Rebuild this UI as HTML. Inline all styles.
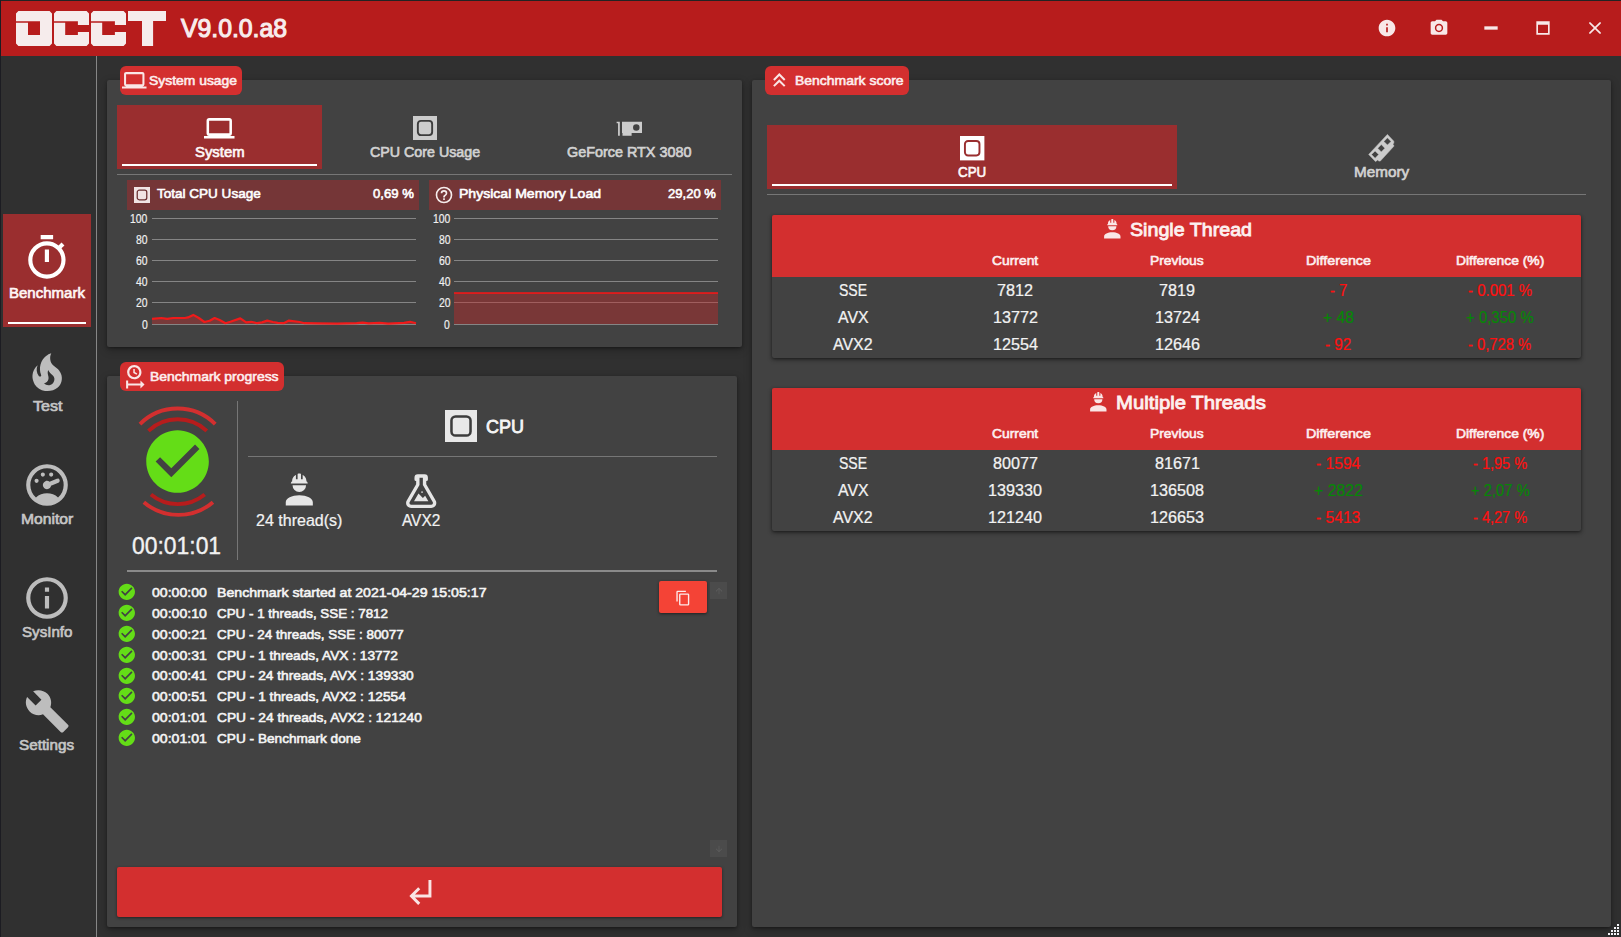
<!DOCTYPE html>
<html>
<head>
<meta charset="utf-8">
<title>OCCT</title>
<style>
html,body{margin:0;padding:0;}
body{width:1621px;height:937px;overflow:hidden;background:#303030;font-family:"Liberation Sans",sans-serif;}
#w{position:relative;width:1621px;height:937px;overflow:hidden;background:#303030;}
.a{position:absolute;}
.i{position:absolute;overflow:visible;}
.t{position:absolute;white-space:nowrap;line-height:1;transform-origin:0 50%;font-weight:400;}
.m{-webkit-text-stroke:0.044em currentColor;}
.r{-webkit-text-stroke:0.015em currentColor;}
.panel{position:absolute;background:#424242;border-radius:2px;box-shadow:0 1px 3px rgba(0,0,0,.33),0 3px 9px rgba(0,0,0,.28);}
.badge{position:absolute;background:#d32f2f;border-radius:6px;height:29px;}
.hr{position:absolute;height:1px;background:#767676;}
.card{position:absolute;background:#424242;border-radius:2px;box-shadow:0 1px 3px rgba(0,0,0,.4),0 2px 5px rgba(0,0,0,.3);}
</style>
</head>
<body>
<div id="w">
<div class="a" style="left:0;top:0;width:1621px;height:1px;background:#232323"></div>
<div class="a" style="left:0;top:0;width:1px;height:937px;background:#1c1c22"></div>
<div class="a" style="left:1px;top:1px;width:1620px;height:55px;background:#b71c1c"></div>
<svg class="i" style="left:0;top:0" width="180" height="56" viewBox="0 0 180 56">
<g fill="#f6ecec">
<path d="M18.4 11H49.6L52 13.4V43.6L49.6 46H18.4L16 43.6V22.75H28V34.9H40V21.25H16V13.4Z"/>
<path d="M56.4 11H86.6L89 13.4V25H77.9V21.25H54V13.4ZM54 22.75H65.2V34.9H77.9V32H89V43.6L86.6 46H56.4L54 43.6Z"/>
<path d="M93.4 11H123.6L126 13.4V25H114.9V21.25H91V13.4ZM91 22.75H102.2V34.9H114.9V32H126V43.6L123.6 46H93.4L91 43.6Z"/>
<path d="M128 11H166V21H153.1V46H142V21H128Z"/>
</g></svg>
<svg class="i" style="left:1376.8px;top:18.25px" width="20" height="20" viewBox="0 0 24 24"><path fill="#f8e8e8" d="M12 2C6.48 2 2 6.48 2 12s4.48 10 10 10 10-4.48 10-10S17.52 2 12 2zm1 15h-2v-6h2v6zm0-8h-2V7h2v2z"/></svg>
<svg class="i" style="left:1428.8px;top:18.25px" width="20" height="20" viewBox="0 0 24 24"><path fill="#f8e8e8" d="M9 2L7.17 4H4c-1.1 0-2 .9-2 2v12c0 1.1.9 2 2 2h16c1.1 0 2-.9 2-2V6c0-1.1-.9-2-2-2h-3.17L15 2H9zm3 15c-2.76 0-5-2.24-5-5s2.24-5 5-5 5 2.24 5 5-2.24 5-5 5z"/><circle cx="12" cy="12" r="3.2" fill="#f8e8e8"/></svg>
<svg class="i" style="left:1480.8px;top:18.25px" width="20" height="20" viewBox="0 0 24 24"><path fill="#f8e8e8" d="M20,14H4V10H20Z"/></svg>
<svg class="i" style="left:1532.8px;top:18.25px" width="20" height="20" viewBox="0 0 24 24"><path fill="#f8e8e8" d="M4,4H20V20H4V4M6,8V18H18V8H6Z"/></svg>
<svg class="i" style="left:1584.8px;top:18.25px" width="20" height="20" viewBox="0 0 24 24"><path fill="#f8e8e8" d="M13.46,12L19,17.54V19H17.54L12,13.46L6.46,19H5V17.54L10.54,12L5,6.46V5H6.46L12,10.54L17.54,5H19V6.46L13.46,12Z"/></svg>
<div class="a" style="left:96px;top:56px;width:1px;height:881px;background:#868686"></div>
<div class="a" style="left:3px;top:214px;width:88px;height:113px;background:#9a2e2f"></div>
<div class="a" style="left:8px;top:322px;width:78px;height:2px;background:#fff"></div>
<svg class="i" style="left:22.1px;top:233.4px" width="49.8" height="49.8" viewBox="0 0 24 24"><path fill="#ffffff" d="M12,20A7,7 0 0,1 5,13A7,7 0 0,1 12,6A7,7 0 0,1 19,13A7,7 0 0,1 12,20M19.03,7.39L20.45,5.97C20,5.46 19.55,5 19.04,4.56L17.62,6C16.07,4.74 14.12,4 12,4A9,9 0 0,0 3,13A9,9 0 0,0 12,22C17,22 21,17.97 21,13C21,10.88 20.26,8.93 19.03,7.39M11,14H13V8H11M15,1H9V3H15V1Z"/></svg>
<svg class="i" style="left:21.5px;top:346.7px" width="50.4" height="50.4" viewBox="0 0 24 24"><path fill="#bdbdbd" d="M17.66 11.2C17.43 10.9 17.15 10.64 16.89 10.38C16.22 9.78 15.46 9.35 14.82 8.72C13.33 7.26 13 4.85 13.95 3C13 3.23 12.17 3.75 11.46 4.32C8.87 6.4 7.85 10.07 9.07 13.22C9.11 13.32 9.15 13.42 9.15 13.55C9.15 13.77 9 13.97 8.8 14.05C8.57 14.15 8.33 14.09 8.14 13.93C8.08 13.88 8.04 13.83 8 13.76C6.87 12.33 6.69 10.28 7.45 8.64C5.78 10 4.87 12.3 5 14.47C5.06 14.97 5.12 15.47 5.29 15.97C5.43 16.57 5.7 17.17 6 17.7C7.08 19.43 8.95 20.67 10.96 20.92C13.1 21.19 15.39 20.8 17.03 19.32C18.86 17.66 19.5 15 18.56 12.72L18.43 12.46C18.22 12 17.66 11.2 17.66 11.2M14.5 17.5C14.22 17.74 13.76 18 13.4 18.1C12.28 18.5 11.16 17.94 10.5 17.28C11.69 17 12.4 16.12 12.61 15.23C12.78 14.43 12.46 13.77 12.33 13C12.21 12.26 12.23 11.63 12.5 10.94C12.69 11.32 12.89 11.7 13.13 12C13.9 13 15.11 13.44 15.37 14.8C15.41 14.94 15.43 15.08 15.43 15.23C15.46 16.05 15.1 16.95 14.5 17.5Z"/></svg>
<svg class="i" style="left:22.1px;top:460px" width="50" height="50" viewBox="0 0 24 24"><path fill="#bdbdbd" d="M12,2A10,10 0 0,0 2,12A10,10 0 0,0 12,22A10,10 0 0,0 22,12A10,10 0 0,0 12,2M12,4A8,8 0 0,1 20,12C20,14.4 19,16.5 17.3,18C15.9,16.7 14,16 12,16C10,16 8.2,16.7 6.7,18C5,16.5 4,14.4 4,12A8,8 0 0,1 12,4M10,6A1,1 0 0,0 9,7A1,1 0 0,0 10,8A1,1 0 0,0 11,7A1,1 0 0,0 10,6M14,6A1,1 0 0,0 13,7A1,1 0 0,0 14,8A1,1 0 0,0 15,7A1,1 0 0,0 14,6M17.09,8.94C16.96,8.94 16.84,8.97 16.7,9L13.5,10.32L13.23,10.43C12.67,10 11.91,9.88 11.25,10.15C10.23,10.56 9.73,11.73 10.15,12.75C10.56,13.77 11.73,14.27 12.75,13.85C13.41,13.59 13.88,13 14,12.28L14.23,12.18L17.45,10.88L17.47,10.87C18,10.66 18.23,10.08 18.03,9.56C17.87,9.18 17.5,8.93 17.09,8.94M7,9A1,1 0 0,0 6,10A1,1 0 0,0 7,11A1,1 0 0,0 8,10A1,1 0 0,0 7,9Z"/></svg>
<svg class="i" style="left:22.1px;top:573px" width="50" height="50" viewBox="0 0 24 24"><path fill="#bdbdbd" d="M11,9H13V7H11M12,20C7.59,20 4,16.41 4,12C4,7.59 7.59,4 12,4C16.41,4 20,7.59 20,12C20,16.41 16.41,20 12,20M12,2A10,10 0 0,0 2,12A10,10 0 0,0 12,22A10,10 0 0,0 22,12A10,10 0 0,0 12,2M11,17H13V11H11V17Z"/></svg>
<svg class="i" style="left:23.7px;top:687.5px" width="46.5" height="46.5" viewBox="0 0 24 24"><path fill="#bdbdbd" d="M22.7,19L13.6,9.9C14.5,7.6 14,4.9 12.1,3C10.1,1 7.1,0.6 4.7,1.7L9,6L6,9L1.6,4.7C0.4,7.1 0.9,10.1 2.9,12.1C4.8,14 7.5,14.5 9.8,13.6L18.9,22.7C19.3,23.1 19.9,23.1 20.3,22.7L22.6,20.4C23.1,20 23.1,19.3 22.7,19Z"/></svg>
<div class="panel" style="left:107px;top:80px;width:635px;height:267px"></div>
<div class="panel" style="left:107px;top:376px;width:630px;height:551px"></div>
<div class="panel" style="left:752px;top:80px;width:859px;height:847px"></div>
<div class="badge" style="left:120px;top:66px;width:122px"></div>
<svg class="i" style="left:122.2px;top:68.3px" width="24.5" height="24.5" viewBox="0 0 24 24"><path fill="#fae6e6" d="M4,6H20V16H4M20,18A2,2 0 0,0 22,16V6C22,4.89 21.1,4 20,4H4C2.89,4 2,4.89 2,6V16A2,2 0 0,0 4,18H0V20H24V18H20Z"/></svg>
<div class="badge" style="left:120px;top:362px;width:164px"></div>
<svg class="i" style="left:122px;top:363.8px" width="24.6" height="24.6" viewBox="0 0 24 24"><path fill="#fae6e6" d="M12,1C8.14,1 5,4.14 5,8A7,7 0 0,0 12,15C15.86,15 19,11.87 19,8C19,4.14 15.86,1 12,1M12,3.15C14.67,3.15 16.85,5.32 16.85,8C16.85,10.68 14.67,12.85 12,12.85A4.85,4.85 0 0,1 7.15,8A4.85,4.85 0 0,1 12,3.15M11,5V8.69L14.19,10.53L14.94,9.23L12.5,7.82V5M4,16V24H6V21H18V24L22,20L18,16V19H6V16"/></svg>
<div class="badge" style="left:765px;top:66px;width:143.5px"></div>
<svg class="i" style="left:766.9px;top:68.3px" width="24.6" height="24.6" viewBox="0 0 24 24"><path fill="#fae6e6" d="M7.41,18.41L6,17L12,11L18,17L16.59,18.41L12,13.83L7.41,18.41M7.41,12.41L6,11L12,5L18,11L16.59,12.41L12,7.83L7.41,12.41Z"/></svg>
<div class="a" style="left:117px;top:105px;width:205px;height:63.6px;background:#9a2e2f"></div>
<div class="a" style="left:122px;top:164px;width:195px;height:2px;background:#fff"></div>
<svg class="i" style="left:204.3px;top:113px" width="30.5" height="30.5" viewBox="0 0 24 24"><path fill="#ffffff" d="M4,6H20V16H4M20,18A2,2 0 0,0 22,16V6C22,4.89 21.1,4 20,4H4C2.89,4 2,4.89 2,6V16A2,2 0 0,0 4,18H0V20H24V18H20Z"/></svg>
<svg class="i" style="left:412.6px;top:115.9px" width="24" height="24" viewBox="0 0 24 24"><rect x="0" y="0" width="24" height="24" fill="#cccccc"/><rect x="4.85" y="4.85" width="14.3" height="14.3" rx="3.1" fill="none" stroke="#3c3c3c" stroke-width="1.9"/></svg>
<svg class="i" style="left:614px;top:113px" width="30" height="30" viewBox="0 0 24 24"><path fill="#cccccc" fill-rule="evenodd" d="M2.1 7H4.65V18.2H3.25V8.1H2.1ZM6.4 7H22.4V16H14.1V18.2H6.8V16H6.4ZM17.84 9A2.6 2.6 0 1 0 17.84 14.2A2.6 2.6 0 1 0 17.84 9Z"/></svg>
<div class="hr" style="left:117px;top:174px;width:615px"></div>
<div class="a" style="left:127px;top:180px;width:292px;height:29.6px;background:#753637"></div>
<div class="a" style="left:429px;top:180px;width:292px;height:29.6px;background:#753637"></div>
<svg class="i" style="left:134px;top:187px" width="16" height="16" viewBox="0 0 24 24"><rect x="0" y="0" width="24" height="24" fill="#f1e4e4"/><rect x="4.85" y="4.85" width="14.3" height="14.3" rx="3.1" fill="none" stroke="#6a2f30" stroke-width="1.9"/></svg>
<svg class="i" style="left:434px;top:185px" width="20" height="20" viewBox="0 0 24 24"><path fill="#f6ecec" d="M11,18H13V16H11V18M12,2A10,10 0 0,0 2,12A10,10 0 0,0 12,22A10,10 0 0,0 22,12A10,10 0 0,0 12,2M12,20C7.59,20 4,16.41 4,12C4,7.59 7.59,4 12,4C16.41,4 20,7.59 20,12C20,16.41 16.41,20 12,20M12,6A4,4 0 0,0 8,10H10A2,2 0 0,1 12,8A2,2 0 0,1 14,10C14,12 11,11.75 11,15H13C13,12.75 16,12.5 16,10A4,4 0 0,0 12,6Z"/></svg>
<svg class="i" style="left:0;top:0" width="1621" height="937" viewBox="0 0 1621 937"><rect x="152" y="218.0" width="264" height="1" fill="#858585"/><rect x="152" y="239.0" width="264" height="1" fill="#858585"/><rect x="152" y="260.0" width="264" height="1" fill="#858585"/><rect x="152" y="281.0" width="264" height="1" fill="#858585"/><rect x="152" y="302.0" width="264" height="1" fill="#858585"/><rect x="152" y="324.0" width="264" height="1" fill="#858585"/><polygon points="152.0,323.9 152.0,318.8 161.3,318.0 167.2,318.8 173.2,318.0 185.0,318.0 188.0,317.4 193.3,314.9 198.8,318.0 204.4,322.0 209.7,320.8 214.6,318.0 219.6,320.0 225.5,323.2 230.4,321.8 240.3,318.4 246.2,322.4 251.1,321.8 257.1,323.2 262.0,322.4 267.3,320.6 272.9,322.0 277.8,322.8 283.7,323.2 289.0,320.6 299.5,322.0 304.4,323.2 317.3,323.4 337.0,323.6 356.7,323.2 362.7,322.6 368.6,323.4 379.4,322.8 388.3,323.6 404.1,322.8 410.0,321.8 416.0,323.2 416.0,323.9" fill="#d32f2f" fill-opacity="0.38"/><polyline points="152.0,318.8 161.3,318.0 167.2,318.8 173.2,318.0 185.0,318.0 188.0,317.4 193.3,314.9 198.8,318.0 204.4,322.0 209.7,320.8 214.6,318.0 219.6,320.0 225.5,323.2 230.4,321.8 240.3,318.4 246.2,322.4 251.1,321.8 257.1,323.2 262.0,322.4 267.3,320.6 272.9,322.0 277.8,322.8 283.7,323.2 289.0,320.6 299.5,322.0 304.4,323.2 317.3,323.4 337.0,323.6 356.7,323.2 362.7,322.6 368.6,323.4 379.4,322.8 388.3,323.6 404.1,322.8 410.0,321.8 416.0,323.2" fill="none" stroke="#f01a1a" stroke-width="2.2" stroke-linejoin="round"/></svg>
<svg class="i" style="left:0;top:0" width="1621" height="937" viewBox="0 0 1621 937"><rect x="454" y="218.0" width="264" height="1" fill="#858585"/><rect x="454" y="239.0" width="264" height="1" fill="#858585"/><rect x="454" y="260.0" width="264" height="1" fill="#858585"/><rect x="454" y="281.0" width="264" height="1" fill="#858585"/><rect x="454" y="302.0" width="264" height="1" fill="#858585"/><rect x="454" y="324.0" width="264" height="1" fill="#858585"/><rect x="454" y="293" width="264" height="31" fill="#c62828" fill-opacity="0.42"/><rect x="454" y="292.2" width="264" height="1.7" fill="#ea1a1a"/></svg>
<svg class="i" style="left:0;top:0" width="300" height="600" viewBox="0 0 300 600"><g fill="none"><path d="M139.98 424.08A53.2 53.2 0 0 1 215.22 424.08" stroke="#d32f2f" stroke-width="3.9"/><path d="M148.41 430.94A42.4 42.4 0 0 1 206.79 430.94" stroke="#b71c1c" stroke-width="3.9"/><path d="M150.89 494.46A42.4 42.4 0 0 0 204.71 494.46" stroke="#b71c1c" stroke-width="3.9"/><path d="M143.85 502.15A53.2 53.2 0 0 0 212.95 502.15" stroke="#d32f2f" stroke-width="3.9"/></g><circle cx="177.6" cy="461.4" r="27" fill="#424242"/></svg>
<svg class="i" style="left:140.05px;top:423.85px" width="75.1" height="75.1" viewBox="0 0 24 24"><path fill="#64dd17" d="M12 2C6.48 2 2 6.48 2 12s4.48 10 10 10 10-4.48 10-10S17.52 2 12 2zm-2 15l-5-5 1.41-1.41L10 14.17l7.59-7.59L19 8l-9 9z"/></svg>
<div class="a" style="left:237px;top:401px;width:1px;height:159px;background:#767676"></div>
<svg class="i" style="left:444.9px;top:410.1px" width="32" height="32" viewBox="0 0 24 24"><rect x="0" y="0" width="24" height="24" fill="#e8e8e8"/><rect x="4.85" y="4.85" width="14.3" height="14.3" rx="3.1" fill="none" stroke="#3c3c3c" stroke-width="1.9"/></svg>
<div class="hr" style="left:248px;top:456px;width:469px"></div>
<svg class="i" style="left:279px;top:470.4px" width="40.6" height="40.6" viewBox="0 0 24 24"><path fill="#e6e6e6" d="M12,15C7.58,15 4,16.79 4,19V21H20V19C20,16.79 16.42,15 12,15M8,9A4,4 0 0,0 12,13A4,4 0 0,0 16,9M11.5,2C11.2,2 11,2.21 11,2.5V5.5H10V3C10,3 7.75,3.86 7.75,6.75C7.75,6.75 7,6.89 7,8H17C16.95,6.89 16.25,6.75 16.25,6.75C16.25,3.86 14,3 14,3V5.5H13V2.5C13,2.21 12.81,2 12.5,2H11.5Z"/></svg>
<svg class="i" style="left:401.1px;top:470.8px" width="40.4" height="40.4" viewBox="0 0 24 24"><path fill="#e6e6e6" d="M5,19A1,1 0 0,0 6,20H18A1,1 0 0,0 19,19C19,18.79 18.93,18.59 18.82,18.43L13,8.35V4H11V8.35L5.18,18.43C5.07,18.59 5,18.79 5,19M6,22A3,3 0 0,1 3,19C3,18.4 3.18,17.84 3.5,17.37L9,7.81V6A1,1 0 0,1 8,5V4A2,2 0 0,1 10,2H14A2,2 0 0,1 16,4V5A1,1 0 0,1 15,6V7.81L20.5,17.37C20.82,17.84 21,18.4 21,19A3,3 0 0,1 18,22H6M13,16L14.34,14.66L16.27,18H7.73L10.39,13.39L13,16M12.5,12A0.5,0.5 0 0,1 13,12.5A0.5,0.5 0 0,1 12.5,13A0.5,0.5 0 0,1 12,12.5A0.5,0.5 0 0,1 12.5,12Z"/></svg>
<div class="a" style="left:127px;top:570px;width:590px;height:2px;background:#8a8a8a"></div>
<svg class="i" style="left:117.3px;top:582.4px" width="19.6" height="19.6" viewBox="0 0 24 24"><path fill="#64dd17" d="M12 2C6.48 2 2 6.48 2 12s4.48 10 10 10 10-4.48 10-10S17.52 2 12 2zm-2 15l-5-5 1.41-1.41L10 14.17l7.59-7.59L19 8l-9 9z"/></svg>
<svg class="i" style="left:117.3px;top:603.2px" width="19.6" height="19.6" viewBox="0 0 24 24"><path fill="#64dd17" d="M12 2C6.48 2 2 6.48 2 12s4.48 10 10 10 10-4.48 10-10S17.52 2 12 2zm-2 15l-5-5 1.41-1.41L10 14.17l7.59-7.59L19 8l-9 9z"/></svg>
<svg class="i" style="left:117.3px;top:624.0px" width="19.6" height="19.6" viewBox="0 0 24 24"><path fill="#64dd17" d="M12 2C6.48 2 2 6.48 2 12s4.48 10 10 10 10-4.48 10-10S17.52 2 12 2zm-2 15l-5-5 1.41-1.41L10 14.17l7.59-7.59L19 8l-9 9z"/></svg>
<svg class="i" style="left:117.3px;top:644.8px" width="19.6" height="19.6" viewBox="0 0 24 24"><path fill="#64dd17" d="M12 2C6.48 2 2 6.48 2 12s4.48 10 10 10 10-4.48 10-10S17.52 2 12 2zm-2 15l-5-5 1.41-1.41L10 14.17l7.59-7.59L19 8l-9 9z"/></svg>
<svg class="i" style="left:117.3px;top:665.6px" width="19.6" height="19.6" viewBox="0 0 24 24"><path fill="#64dd17" d="M12 2C6.48 2 2 6.48 2 12s4.48 10 10 10 10-4.48 10-10S17.52 2 12 2zm-2 15l-5-5 1.41-1.41L10 14.17l7.59-7.59L19 8l-9 9z"/></svg>
<svg class="i" style="left:117.3px;top:686.4px" width="19.6" height="19.6" viewBox="0 0 24 24"><path fill="#64dd17" d="M12 2C6.48 2 2 6.48 2 12s4.48 10 10 10 10-4.48 10-10S17.52 2 12 2zm-2 15l-5-5 1.41-1.41L10 14.17l7.59-7.59L19 8l-9 9z"/></svg>
<svg class="i" style="left:117.3px;top:707.2px" width="19.6" height="19.6" viewBox="0 0 24 24"><path fill="#64dd17" d="M12 2C6.48 2 2 6.48 2 12s4.48 10 10 10 10-4.48 10-10S17.52 2 12 2zm-2 15l-5-5 1.41-1.41L10 14.17l7.59-7.59L19 8l-9 9z"/></svg>
<svg class="i" style="left:117.3px;top:728.0px" width="19.6" height="19.6" viewBox="0 0 24 24"><path fill="#64dd17" d="M12 2C6.48 2 2 6.48 2 12s4.48 10 10 10 10-4.48 10-10S17.52 2 12 2zm-2 15l-5-5 1.41-1.41L10 14.17l7.59-7.59L19 8l-9 9z"/></svg>
<div class="a" style="left:659px;top:581px;width:48px;height:32px;background:#f44336;border-radius:2px;box-shadow:0 1px 3px rgba(0,0,0,.5)"></div>
<svg class="i" style="left:674.6px;top:589.7px" width="16.3" height="16.3" viewBox="0 0 24 24"><path fill="#fdeaea" d="M19,21H8V7H19M19,5H8A2,2 0 0,0 6,7V21A2,2 0 0,0 8,23H19A2,2 0 0,0 21,21V7A2,2 0 0,0 19,5M16,1H4A2,2 0 0,0 2,3V17H4V3H16V1Z"/></svg>
<div class="a" style="left:710px;top:582px;width:17px;height:17px;background:#4b4b4b"></div>
<svg class="i" style="left:713.5px;top:585.5px" width="10" height="10" viewBox="0 0 24 24"><path fill="#5c5c5c" d="M13,20H11V8L5.5,13.5L4.08,12.08L12,4.16L19.92,12.08L18.5,13.5L13,8V20Z"/></svg>
<div class="a" style="left:710px;top:840px;width:17px;height:17px;background:#4b4b4b"></div>
<svg class="i" style="left:713.5px;top:843.5px" width="10" height="10" viewBox="0 0 24 24"><path fill="#5c5c5c" d="M11,4H13V16L18.5,10.5L19.92,11.92L12,19.84L4.08,11.92L5.5,10.5L11,16V4Z"/></svg>
<div class="a" style="left:117px;top:867px;width:605px;height:50px;background:#d32f2f;border-radius:2px;box-shadow:0 1px 3px rgba(0,0,0,.5)"></div>
<svg class="i" style="left:402px;top:874.3px" width="35.3" height="35.3" viewBox="0 0 24 24"><path fill="#fae4e4" d="M11,9L12.42,10.42L8.83,14H18V4H20V16H8.83L12.42,19.58L11,21L5,15L11,9Z"/></svg>
<div class="a" style="left:767px;top:125px;width:409.5px;height:63.6px;background:#9a2e2f"></div>
<div class="a" style="left:772px;top:184px;width:399.5px;height:2px;background:#fff"></div>
<svg class="i" style="left:959.7px;top:135.8px" width="24.4" height="24.4" viewBox="0 0 24 24"><rect x="0" y="0" width="24" height="24" fill="#ffffff"/><rect x="4.85" y="4.85" width="14.3" height="14.3" rx="3.1" fill="none" stroke="#9a2e2f" stroke-width="1.9"/></svg>
<svg class="i" style="left:0;top:0" width="1621" height="200" viewBox="0 0 1621 200"><path fill="#cccccc" fill-rule="evenodd" stroke="#cccccc" stroke-width="0.5" stroke-linejoin="round" d="M1368.7 154.4L1387.4 134.4L1393.8 141.2L1393.8 143.3L1393.0 143.55L1393.0 144.8L1393.8 145.2L1393.8 146.3L1380.3 161.1L1378.9 161.1L1377.6 159.9L1376.8 160.7L1375.5 161.6ZM1387.46 137.77L1391.06 141.42L1387.46 145.07L1383.86 141.42ZM1381.3 144.58L1384.90 148.23L1381.3 151.88L1377.70 148.23ZM1375.1 150.95L1378.70 154.6L1375.1 158.25L1371.50 154.6Z"/></svg>
<div class="hr" style="left:767px;top:194px;width:819px"></div>
<div class="card" style="left:772px;top:215px;width:809px;height:142.8px"></div><div class="a" style="left:772px;top:215px;width:809px;height:62px;background:#d32f2f;border-radius:2px 2px 0 0"></div>
<svg class="i" style="left:1100.0px;top:216.7px" width="24.6" height="24.6" viewBox="0 0 24 24"><path fill="#fae6e6" d="M12,15C7.58,15 4,16.79 4,19V21H20V19C20,16.79 16.42,15 12,15M8,9A4,4 0 0,0 12,13A4,4 0 0,0 16,9M11.5,2C11.2,2 11,2.21 11,2.5V5.5H10V3C10,3 7.75,3.86 7.75,6.75C7.75,6.75 7,6.89 7,8H17C16.95,6.89 16.25,6.75 16.25,6.75C16.25,3.86 14,3 14,3V5.5H13V2.5C13,2.21 12.81,2 12.5,2H11.5Z"/></svg>
<div class="card" style="left:772px;top:388.1px;width:809px;height:142.8px"></div><div class="a" style="left:772px;top:388.1px;width:809px;height:62px;background:#d32f2f;border-radius:2px 2px 0 0"></div>
<svg class="i" style="left:1086.1px;top:389.8px" width="24.6" height="24.6" viewBox="0 0 24 24"><path fill="#fae6e6" d="M12,15C7.58,15 4,16.79 4,19V21H20V19C20,16.79 16.42,15 12,15M8,9A4,4 0 0,0 12,13A4,4 0 0,0 16,9M11.5,2C11.2,2 11,2.21 11,2.5V5.5H10V3C10,3 7.75,3.86 7.75,6.75C7.75,6.75 7,6.89 7,8H17C16.95,6.89 16.25,6.75 16.25,6.75C16.25,3.86 14,3 14,3V5.5H13V2.5C13,2.21 12.81,2 12.5,2H11.5Z"/></svg>
<svg class="i" style="left:0;top:0" width="1621" height="937" viewBox="0 0 1621 937"><rect x="1617" y="924" width="2" height="2" fill="#f4f4f8"/><rect x="1614" y="927" width="2" height="2" fill="#f4f4f8"/><rect x="1617" y="927" width="2" height="2" fill="#f4f4f8"/><rect x="1611" y="930" width="2" height="2" fill="#f4f4f8"/><rect x="1614" y="930" width="2" height="2" fill="#f4f4f8"/><rect x="1617" y="930" width="2" height="2" fill="#f4f4f8"/><rect x="1608" y="933" width="2" height="2" fill="#f4f4f8"/><rect x="1611" y="933" width="2" height="2" fill="#f4f4f8"/><rect x="1614" y="933" width="2" height="2" fill="#f4f4f8"/><rect x="1617" y="933" width="2" height="2" fill="#f4f4f8"/></svg>
<!-- text -->
<span class="t m" style="left:181.20px;top:16px;font-size:24.86px;color:#f8ecec;transform:scaleX(0.9959);">V9.0.0.a8</span>
<span class="t m" style="left:9.20px;top:286px;font-size:14.62px;color:#fff6f6;transform:scaleX(1.0272);">Benchmark</span>
<span class="t m" style="left:32.60px;top:399px;font-size:14.62px;color:#c6c6c6;transform:scaleX(1.1009);">Test</span>
<span class="t m" style="left:20.90px;top:512px;font-size:14.62px;color:#c6c6c6;transform:scaleX(1.0735);">Monitor</span>
<span class="t m" style="left:21.80px;top:625px;font-size:14.62px;color:#c6c6c6;transform:scaleX(1.0362);">SysInfo</span>
<span class="t m" style="left:19.20px;top:738px;font-size:14.62px;color:#c6c6c6;transform:scaleX(1.0436);">Settings</span>
<span class="t m" style="left:149.20px;top:75px;font-size:12.67px;color:#fdeeee;transform:scaleX(1.0972);">System usage</span>
<span class="t m" style="left:149.70px;top:371px;font-size:12.67px;color:#fdeeee;transform:scaleX(1.1012);">Benchmark progress</span>
<span class="t m" style="left:794.50px;top:75px;font-size:12.67px;color:#fdeeee;transform:scaleX(1.1027);">Benchmark score</span>
<span class="t m" style="left:194.60px;top:145px;font-size:14.62px;color:#fff8f8;transform:scaleX(1.0181);">System</span>
<span class="t m" style="left:369.60px;top:145px;font-size:14.62px;color:#d2d2d2;transform:scaleX(0.9756);">CPU Core Usage</span>
<span class="t m" style="left:567.30px;top:145px;font-size:14.62px;color:#d2d2d2;transform:scaleX(0.9841);">GeForce RTX 3080</span>
<span class="t m" style="left:157.40px;top:187px;font-size:13.65px;color:#ffffff;transform:scaleX(0.9912);">Total CPU Usage</span>
<span class="t m" style="left:373.20px;top:187px;font-size:13.65px;color:#ffffff;transform:scaleX(0.9631);">0,69 %</span>
<span class="t m" style="left:459.30px;top:187px;font-size:13.65px;color:#ffffff;transform:scaleX(1.0291);">Physical Memory Load</span>
<span class="t m" style="left:667.50px;top:187px;font-size:13.65px;color:#ffffff;transform:scaleX(0.9568);">29,20 %</span>
<span class="t r" style="left:130.49px;top:213px;font-size:12.5px;color:#f0f0f0;transform:scaleX(0.8300);">100</span>
<span class="t r" style="left:432.89px;top:213px;font-size:12.5px;color:#f0f0f0;transform:scaleX(0.8300);">100</span>
<span class="t r" style="left:136.26px;top:234px;font-size:12.5px;color:#f0f0f0;transform:scaleX(0.8300);">80</span>
<span class="t r" style="left:438.66px;top:234px;font-size:12.5px;color:#f0f0f0;transform:scaleX(0.8300);">80</span>
<span class="t r" style="left:136.26px;top:255px;font-size:12.5px;color:#f0f0f0;transform:scaleX(0.8300);">60</span>
<span class="t r" style="left:438.66px;top:255px;font-size:12.5px;color:#f0f0f0;transform:scaleX(0.8300);">60</span>
<span class="t r" style="left:136.26px;top:276px;font-size:12.5px;color:#f0f0f0;transform:scaleX(0.8300);">40</span>
<span class="t r" style="left:438.66px;top:276px;font-size:12.5px;color:#f0f0f0;transform:scaleX(0.8300);">40</span>
<span class="t r" style="left:136.26px;top:297px;font-size:12.5px;color:#f0f0f0;transform:scaleX(0.8300);">20</span>
<span class="t r" style="left:438.66px;top:297px;font-size:12.5px;color:#f0f0f0;transform:scaleX(0.8300);">20</span>
<span class="t r" style="left:142.03px;top:319px;font-size:12.5px;color:#f0f0f0;transform:scaleX(0.8300);">0</span>
<span class="t r" style="left:444.43px;top:319px;font-size:12.5px;color:#f0f0f0;transform:scaleX(0.8300);">0</span>
<span class="t r" style="left:132.05px;top:535px;font-size:23.5px;color:#f2f2f2;transform:scaleX(0.9739);">00:01:01</span>
<span class="t m" style="left:486.00px;top:418px;font-size:18.04px;color:#f5f5f5;transform:scaleX(0.9979);">CPU</span>
<span class="t r" style="left:256.10px;top:513px;font-size:16px;color:#f2f2f2;">24 thread(s)</span>
<span class="t r" style="left:402.20px;top:513px;font-size:16px;color:#f2f2f2;transform:scaleX(0.9614);">AVX2</span>
<span class="t m" style="left:151.80px;top:586px;font-size:13.65px;color:#f5f5f5;transform:scaleX(1.0318);">00:00:00</span>
<span class="t m" style="left:217.20px;top:586px;font-size:13.65px;color:#f5f5f5;transform:scaleX(1.0361);">Benchmark started at 2021-04-29 15:05:17</span>
<span class="t m" style="left:151.80px;top:607px;font-size:13.65px;color:#f5f5f5;transform:scaleX(1.0318);">00:00:10</span>
<span class="t m" style="left:217.20px;top:607px;font-size:13.65px;color:#f5f5f5;transform:scaleX(0.9806);">CPU - 1 threads, SSE : 7812</span>
<span class="t m" style="left:151.80px;top:628px;font-size:13.65px;color:#f5f5f5;transform:scaleX(1.0318);">00:00:21</span>
<span class="t m" style="left:217.20px;top:628px;font-size:13.65px;color:#f5f5f5;transform:scaleX(0.9854);">CPU - 24 threads, SSE : 80077</span>
<span class="t m" style="left:151.80px;top:649px;font-size:13.65px;color:#f5f5f5;transform:scaleX(1.0318);">00:00:31</span>
<span class="t m" style="left:217.20px;top:649px;font-size:13.65px;color:#f5f5f5;transform:scaleX(1.0038);">CPU - 1 threads, AVX : 13772</span>
<span class="t m" style="left:151.80px;top:669px;font-size:13.65px;color:#f5f5f5;transform:scaleX(1.0318);">00:00:41</span>
<span class="t m" style="left:217.20px;top:669px;font-size:13.65px;color:#f5f5f5;transform:scaleX(1.0067);">CPU - 24 threads, AVX : 139330</span>
<span class="t m" style="left:151.80px;top:690px;font-size:13.65px;color:#f5f5f5;transform:scaleX(1.0318);">00:00:51</span>
<span class="t m" style="left:217.20px;top:690px;font-size:13.65px;color:#f5f5f5;transform:scaleX(1.0053);">CPU - 1 threads, AVX2 : 12554</span>
<span class="t m" style="left:151.80px;top:711px;font-size:13.65px;color:#f5f5f5;transform:scaleX(1.0318);">00:01:01</span>
<span class="t m" style="left:217.20px;top:711px;font-size:13.65px;color:#f5f5f5;transform:scaleX(1.0090);">CPU - 24 threads, AVX2 : 121240</span>
<span class="t m" style="left:151.80px;top:732px;font-size:13.65px;color:#f5f5f5;transform:scaleX(1.0318);">00:01:01</span>
<span class="t m" style="left:217.20px;top:732px;font-size:13.65px;color:#f5f5f5;transform:scaleX(0.9990);">CPU - Benchmark done</span>
<span class="t m" style="left:957.50px;top:165px;font-size:14.62px;color:#fff8f8;transform:scaleX(0.9171);">CPU</span>
<span class="t m" style="left:1353.90px;top:165px;font-size:14.62px;color:#d2d2d2;transform:scaleX(1.0442);">Memory</span>
<span class="t m" style="left:1130.00px;top:221px;font-size:18.52px;color:#fdf0f0;transform:scaleX(1.0613);">Single Thread</span>
<span class="t m" style="left:991.90px;top:254px;font-size:13.65px;color:#fdf0f0;transform:scaleX(1.0157);">Current</span>
<span class="t m" style="left:1150.15px;top:254px;font-size:13.65px;color:#fdf0f0;transform:scaleX(1.0117);">Previous</span>
<span class="t m" style="left:1306.00px;top:254px;font-size:13.65px;color:#fdf0f0;transform:scaleX(1.0494);">Difference</span>
<span class="t m" style="left:1455.85px;top:254px;font-size:13.65px;color:#fdf0f0;transform:scaleX(1.0157);">Difference (%)</span>
<span class="t r" style="left:838.96px;top:283px;font-size:16px;color:#f2f2f2;transform:scaleX(0.8770);">SSE</span>
<span class="t r" style="left:997.03px;top:283px;font-size:16px;color:#f2f2f2;transform:scaleX(1.0097);">7812</span>
<span class="t r" style="left:1159.03px;top:283px;font-size:16px;color:#f2f2f2;transform:scaleX(1.0097);">7819</span>
<span class="t r" style="left:1329.82px;top:283px;font-size:16px;color:#ff1010;transform:scaleX(0.9297);">- 7</span>
<span class="t r" style="left:1467.90px;top:283px;font-size:16px;color:#ff1010;transform:scaleX(0.9375);">- 0.001 %</span>
<span class="t r" style="left:837.68px;top:310px;font-size:16px;color:#f2f2f2;transform:scaleX(0.9942);">AVX</span>
<span class="t r" style="left:992.54px;top:310px;font-size:16px;color:#f2f2f2;transform:scaleX(1.0095);">13772</span>
<span class="t r" style="left:1154.54px;top:310px;font-size:16px;color:#f2f2f2;transform:scaleX(1.0095);">13724</span>
<span class="t r" style="left:1323.00px;top:310px;font-size:16px;color:#078607;transform:scaleX(0.9812);">+ 48</span>
<span class="t r" style="left:1466.11px;top:310px;font-size:16px;color:#078607;transform:scaleX(0.9350);">+ 0,350 %</span>
<span class="t r" style="left:833.18px;top:337px;font-size:16px;color:#f2f2f2;transform:scaleX(0.9974);">AVX2</span>
<span class="t r" style="left:992.54px;top:337px;font-size:16px;color:#f2f2f2;transform:scaleX(1.0095);">12554</span>
<span class="t r" style="left:1154.54px;top:337px;font-size:16px;color:#f2f2f2;transform:scaleX(1.0095);">12646</span>
<span class="t r" style="left:1325.33px;top:337px;font-size:16px;color:#ff1010;transform:scaleX(0.9552);">- 92</span>
<span class="t r" style="left:1468.43px;top:337px;font-size:16px;color:#ff1010;transform:scaleX(0.9219);">- 0,728 %</span>
<span class="t m" style="left:1115.80px;top:394px;font-size:18.52px;color:#fdf0f0;transform:scaleX(1.0971);">Multiple Threads</span>
<span class="t m" style="left:991.90px;top:427px;font-size:13.65px;color:#fdf0f0;transform:scaleX(1.0157);">Current</span>
<span class="t m" style="left:1150.15px;top:427px;font-size:13.65px;color:#fdf0f0;transform:scaleX(1.0117);">Previous</span>
<span class="t m" style="left:1306.00px;top:427px;font-size:13.65px;color:#fdf0f0;transform:scaleX(1.0494);">Difference</span>
<span class="t m" style="left:1455.85px;top:427px;font-size:13.65px;color:#fdf0f0;transform:scaleX(1.0157);">Difference (%)</span>
<span class="t r" style="left:838.96px;top:456px;font-size:16px;color:#f2f2f2;transform:scaleX(0.8770);">SSE</span>
<span class="t r" style="left:992.54px;top:456px;font-size:16px;color:#f2f2f2;transform:scaleX(1.0095);">80077</span>
<span class="t r" style="left:1154.54px;top:456px;font-size:16px;color:#f2f2f2;transform:scaleX(1.0095);">81671</span>
<span class="t r" style="left:1316.34px;top:456px;font-size:16px;color:#ff1010;transform:scaleX(0.9766);">- 1594</span>
<span class="t r" style="left:1472.93px;top:456px;font-size:16px;color:#ff1010;transform:scaleX(0.9086);">- 1,95 %</span>
<span class="t r" style="left:837.68px;top:483px;font-size:16px;color:#f2f2f2;transform:scaleX(0.9942);">AVX</span>
<span class="t r" style="left:988.05px;top:483px;font-size:16px;color:#f2f2f2;transform:scaleX(1.0097);">139330</span>
<span class="t r" style="left:1150.05px;top:483px;font-size:16px;color:#f2f2f2;transform:scaleX(1.0097);">136508</span>
<span class="t r" style="left:1314.02px;top:483px;font-size:16px;color:#078607;transform:scaleX(0.9915);">+ 2822</span>
<span class="t r" style="left:1470.60px;top:483px;font-size:16px;color:#078607;transform:scaleX(0.9245);">+ 2,07 %</span>
<span class="t r" style="left:833.18px;top:510px;font-size:16px;color:#f2f2f2;transform:scaleX(0.9974);">AVX2</span>
<span class="t r" style="left:988.05px;top:510px;font-size:16px;color:#f2f2f2;transform:scaleX(1.0097);">121240</span>
<span class="t r" style="left:1150.05px;top:510px;font-size:16px;color:#f2f2f2;transform:scaleX(1.0097);">126653</span>
<span class="t r" style="left:1316.34px;top:510px;font-size:16px;color:#ff1010;transform:scaleX(0.9766);">- 5413</span>
<span class="t r" style="left:1472.93px;top:510px;font-size:16px;color:#ff1010;transform:scaleX(0.9086);">- 4,27 %</span>
</div>
</body>
</html>
